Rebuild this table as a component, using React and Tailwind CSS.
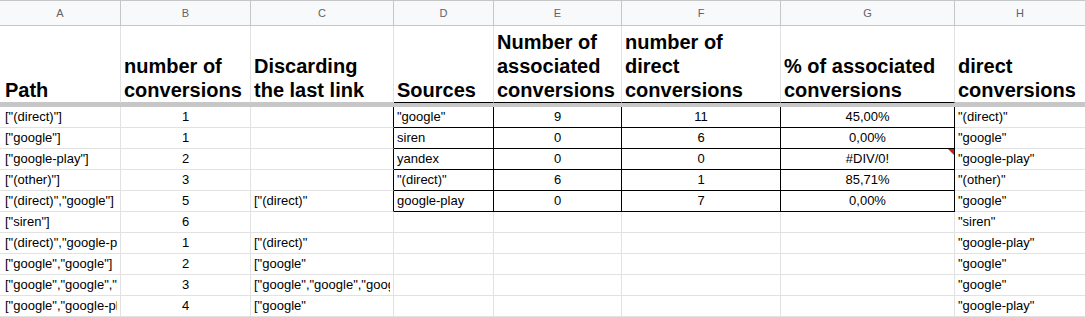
import React from "react";

const W = [
  "w-[121px]",
  "w-[130px]",
  "w-[143px]",
  "w-[100px]",
  "w-[128px]",
  "w-[159px]",
  "w-[174px]",
  "flex-1",
];

const letters = ["A", "B", "C", "D", "E", "F", "G", "H"];

const headers = [
  ["Path"],
  ["number of", "conversions"],
  ["Discarding", "the last link"],
  ["Sources"],
  ["Number of", "associated", "conversions"],
  ["number of", "direct", "conversions"],
  ["% of associated", "conversions"],
  ["direct", "conversions"],
];

const rows = [
  ['["(direct)"]', "1", "", '"google"', "9", "11", "45,00%", '"(direct)"'],
  ['["google"]', "1", "", "siren", "0", "6", "0,00%", '"google"'],
  ['["google-play"]', "2", "", "yandex", "0", "0", "#DIV/0!", '"google-play"'],
  ['["(other)"]', "3", "", '"(direct)"', "6", "1", "85,71%", '"(other)"'],
  ['["(direct)","google"]', "5", '["(direct)"', "google-play", "0", "7", "0,00%", '"google"'],
  ['["siren"]', "6", "", "", "", "", "", '"siren"'],
  ['["(direct)","google-play"]', "1", '["(direct)"', "", "", "", "", '"google-play"'],
  ['["google","google"]', "2", '["google"', "", "", "", "", '"google"'],
  ['["google","google","google"]', "3", '["google","google","google"]', "", "", "", "", '"google"'],
  ['["google","google-play"]', "4", '["google"', "", "", "", "", '"google-play"'],
];

const centered = [false, true, false, false, true, true, true, false];

function DataCell({ r, c, value }) {
  const inBox = r < 5 && c >= 3 && c <= 6;
  const rightBlack = r < 5 && c >= 2 && c <= 6;
  const right =
    c === 7 ? "" : rightBlack ? "border-r border-r-black" : "border-r border-r-[#e2e2e2]";
  const bottom = inBox ? "border-b border-b-black" : "border-b border-b-[#e2e2e2]";
  const align = centered[c] ? "text-center" : "text-left";
  return (
    <div className={`${W[c]} relative ${right} ${bottom} ${c === 0 ? "pl-[5px] pr-[3px]" : "px-[3px]"}`}>
      <div className={`overflow-hidden whitespace-nowrap text-[13px] leading-[20px] ${align}`}>
        {value}
      </div>
      {r === 2 && c === 6 && (
        <div className="absolute top-0 right-0 w-0 h-0 border-t-[6px] border-l-[6px] border-t-[#c5221f] border-l-transparent" />
      )}
    </div>
  );
}

export default function App() {
  return (
    <div className="w-[1085px] h-[317px] overflow-hidden bg-white text-black font-['Liberation_Sans',Arial,sans-serif]">
      {/* column letters */}
      <div className="flex h-[26px] border-t border-b border-[#c4c7c5] bg-[#f8f9fa]">
        {letters.map((l, i) => (
          <div
            key={l}
            className={`${W[i]} flex items-center justify-center text-[11px] text-[#5f6368] ${
              i < 7 ? "border-r border-r-[#c4c7c5]" : ""
            }`}
          >
            {l}
          </div>
        ))}
      </div>

      {/* header row */}
      <div className="flex h-[77px]">
        {headers.map((lines, i) => {
          const box = i >= 3 && i <= 6;
          return (
            <div
              key={i}
              className={`${W[i]} flex flex-col justify-end ${
                i === 0 ? "pl-[5px] pr-[3px]" : "px-[3px]"
              } ${i < 7 ? "border-r border-r-[#e2e2e2]" : ""} ${
                box ? "border-b border-b-black" : "border-b border-b-[#c7c7c7]"
              }`}
            >
              <div className="text-[20px] leading-[24px] font-bold whitespace-nowrap overflow-hidden">
                {lines.map((t, k) => (
                  <div key={k}>{t}</div>
                ))}
              </div>
            </div>
          );
        })}
      </div>

      {/* frozen band */}
      <div className="h-[4px] bg-[#c7c7c7]" />

      {/* data rows */}
      {rows.map((row, r) => (
        <div key={r} className="flex h-[21px]">
          {row.map((v, c) => (
            <DataCell key={c} r={r} c={c} value={v} />
          ))}
        </div>
      ))}
    </div>
  );
}
